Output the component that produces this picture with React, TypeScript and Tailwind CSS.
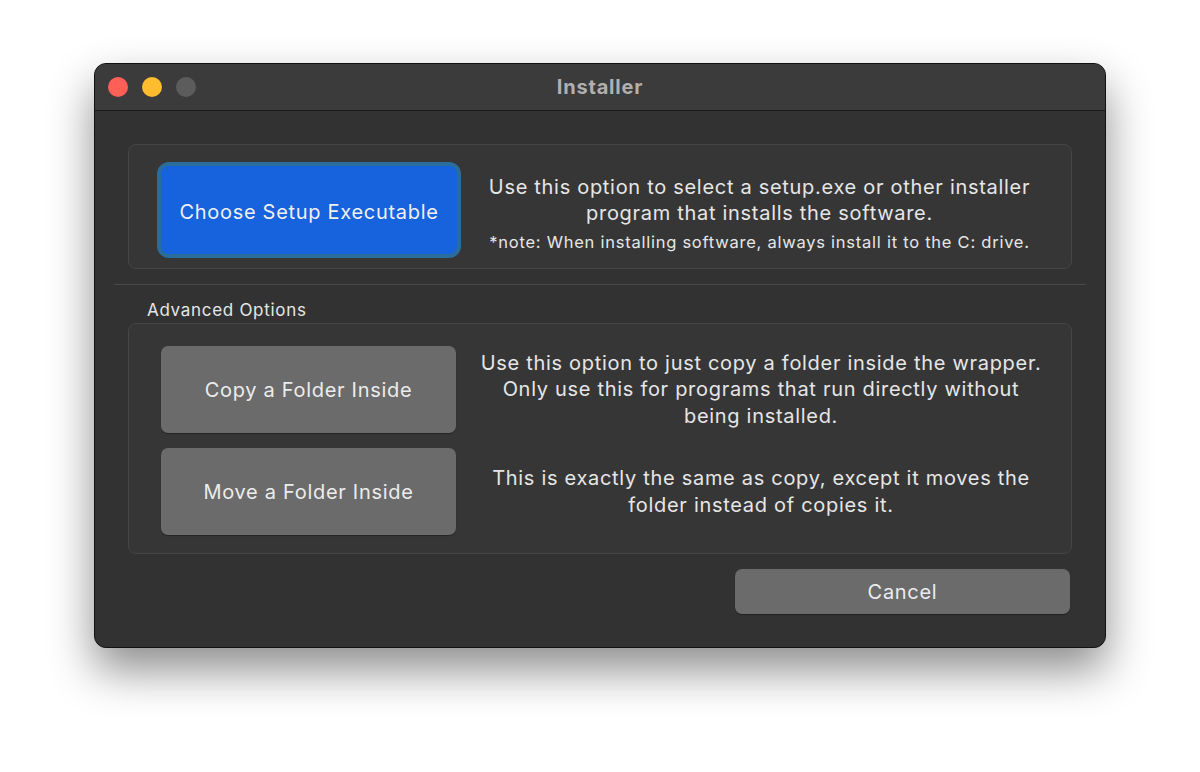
import React from 'react';

const font = { fontFamily: 'Inter, "Noto Sans", "Liberation Sans", sans-serif' };

function TrafficLights() {
  return (
    <div className="flex items-center gap-[14px]">
      <span className="h-[20px] w-[20px] rounded-full bg-[#fe5f57]" />
      <span className="h-[20px] w-[20px] rounded-full bg-[#febc2e]" />
      <span className="h-[20px] w-[20px] rounded-full bg-[#5c5c5c]" />
    </div>
  );
}

function GrayButton({ label, className = '' }: { label: string; className?: string }) {
  return (
    <button
      className={`flex items-center justify-center rounded-[7px] bg-[#6b6b6b] text-[20px] tracking-[0.7px] text-[#ececec] shadow-[0_1px_1px_rgba(0,0,0,0.35)] ${className}`}
    >
      {label}
    </button>
  );
}

export default function App() {
  return (
    <div className="h-[772px] w-[1200px] bg-white pl-[94px] pt-[63px]" style={font}>
      <div className="flex h-[585px] w-[1012px] flex-col overflow-hidden rounded-[12px] border border-[#111] bg-[#323232] shadow-[0_22px_45px_rgba(0,0,0,0.45)]">
        {/* Title bar */}
        <div className="relative flex h-[47px] shrink-0 items-center border-b border-[#1b1b1b] bg-[#3b3b3b] pl-[13px]">
          <TrafficLights />
          <span className="absolute left-1/2 top-1/2 -translate-x-1/2 -translate-y-1/2 text-[20px] font-bold tracking-[0.8px] text-[#b0b0b0]">
            Installer
          </span>
        </div>

        {/* Body */}
        <div className="flex flex-1 flex-col px-[19px] pt-[33px]">
          {/* Main option */}
          <div className="mx-[14px] flex h-[125px] rounded-[8px] border border-[#464646] bg-[#363636] pl-[28px] pt-[17px]">
            <div className="h-[96px] w-[304px] rounded-[12px] bg-[#2a6d9c] p-[4px]">
              <button className="flex h-full w-full items-center justify-center rounded-[8px] bg-[#1762dd] pt-[3px] text-[20px] tracking-[0.7px] text-[#f0f0f0]">
                Choose Setup Executable
              </button>
            </div>
            <div className="flex flex-1 flex-col items-center pr-[13px] pt-[12px] text-center tracking-[0.7px] text-[#e6e6e6]">
              <p className="text-[20px] leading-[26px]">
                Use this option to select a setup.exe or other installer
                <br />
                program that installs the software.
              </p>
              <p className="mt-[6px] text-[16.5px] leading-[20px] tracking-[0.75px]">
                *note: When installing software, always install it to the C: drive.
              </p>
            </div>
          </div>

          {/* Separator */}
          <div className="mt-[15px] h-px bg-[#4a4a4a]" />

          <div className="ml-[33px] mt-[15px] text-[17px] leading-[20px] tracking-[0.7px] text-[#e6e6e6]">
            Advanced Options
          </div>

          {/* Advanced options */}
          <div className="mx-[14px] mt-[3px] flex h-[231px] flex-col gap-[15px] rounded-[8px] border border-[#464646] bg-[#363636] pl-[32px] pt-[22px]">
            <div className="flex items-center">
              <GrayButton label="Copy a Folder Inside" className="h-[87px] w-[295px]" />
              <p className="flex-1 pr-[5px] text-center text-[20px] leading-[26.5px] tracking-[0.7px] text-[#e6e6e6]">
                Use this option to just copy a folder inside the wrapper.
                <br />
                Only use this for programs that run directly without
                <br />
                being installed.
              </p>
            </div>
            <div className="flex items-center">
              <GrayButton label="Move a Folder Inside" className="h-[87px] w-[295px]" />
              <p className="flex-1 pr-[5px] text-center text-[20px] leading-[27px] tracking-[0.7px] text-[#e6e6e6]">
                This is exactly the same as copy, except it moves the
                <br />
                folder instead of copies it.
              </p>
            </div>
          </div>

          {/* Footer */}
          <div className="mt-[15px] flex justify-end pr-[16px]">
            <GrayButton label="Cancel" className="h-[45px] w-[335px] rounded-[6px]" />
          </div>
        </div>
      </div>
    </div>
  );
}
